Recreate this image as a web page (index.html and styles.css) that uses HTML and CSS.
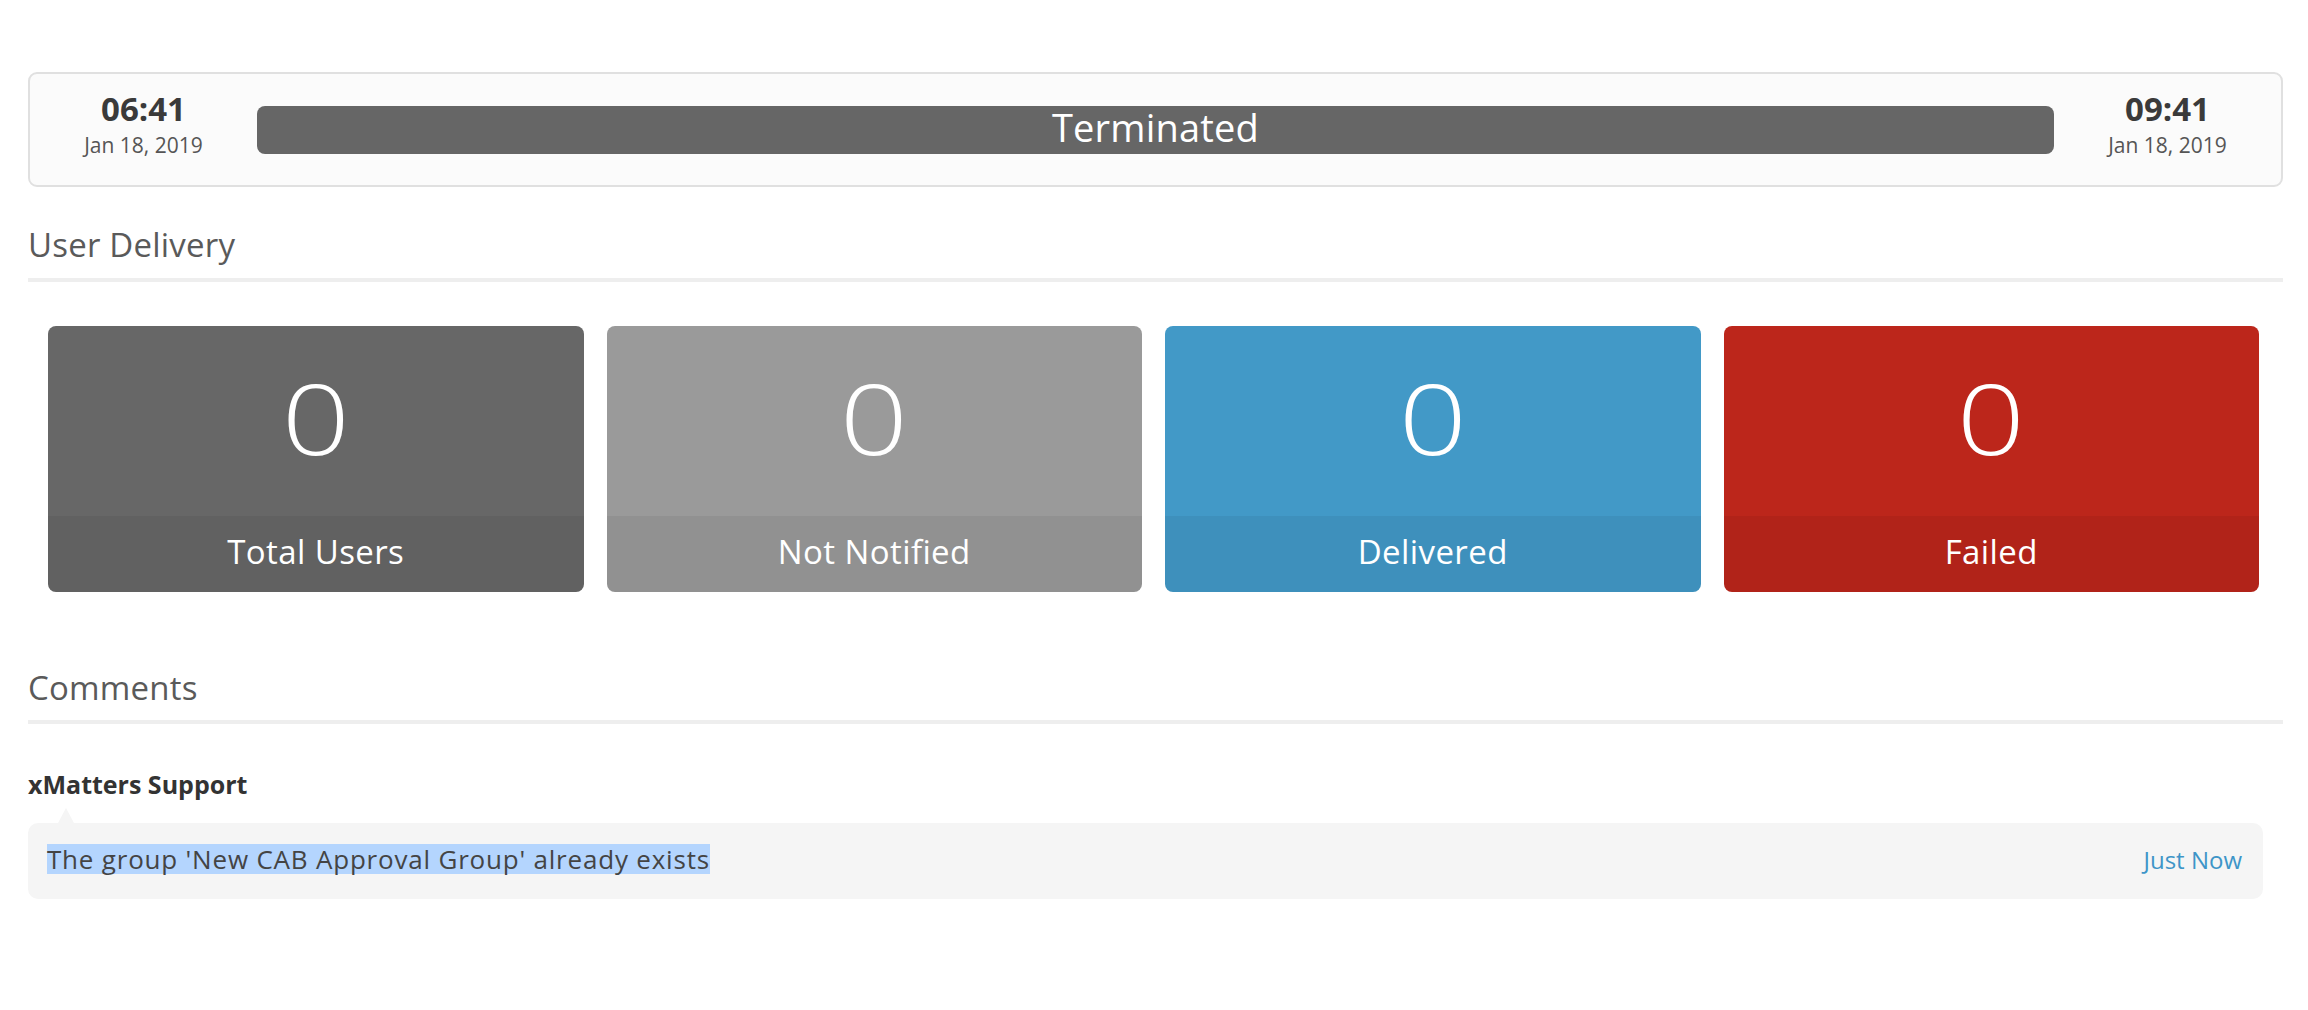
FILE: index.html
```html
<!DOCTYPE html>
<html lang="en">
<head>
<meta charset="utf-8">
<title>Event</title>
<link rel="stylesheet" href="styles.css">
</head>
<body>
<div class="page">
  <div class="timeline">
    <div class="stamp">
      <div class="time">06:41</div>
      <div class="date">Jan 18, 2019</div>
    </div>
    <div class="status-bar">Terminated</div>
    <div class="stamp">
      <div class="time">09:41</div>
      <div class="date">Jan 18, 2019</div>
    </div>
  </div>

  <h2 class="section-title title-delivery">User Delivery</h2>
  <div class="cards">
    <div class="card card-total">
      <div class="card-value"><span class="digit">0</span></div>
      <div class="card-label">Total Users</div>
    </div>
    <div class="card card-not">
      <div class="card-value"><span class="digit">0</span></div>
      <div class="card-label">Not Notified</div>
    </div>
    <div class="card card-delivered">
      <div class="card-value"><span class="digit">0</span></div>
      <div class="card-label">Delivered</div>
    </div>
    <div class="card card-failed">
      <div class="card-value"><span class="digit">0</span></div>
      <div class="card-label">Failed</div>
    </div>
  </div>

  <h2 class="section-title title-comments">Comments</h2>
  <div class="comment">
    <div class="comment-author">xMatters Support</div>
    <div class="comment-bubble">
      <span class="comment-text"><span class="selected">The group 'New CAB Approval Group' already exists</span></span>
      <span class="comment-time">Just Now</span>
    </div>
  </div>
</div>
</body>
</html>
```

FILE: styles.css
```css
* { box-sizing: border-box; }
html, body { margin: 0; padding: 0; background: #ffffff; }
body {
  font-family: "Open Sans", "Liberation Sans", sans-serif;
  color: #444;
}
.page {
  padding: 72px 25px 0 28px;
}

/* timeline */
.timeline {
  display: flex;
  height: 115px;
  border: 2px solid #e0e0e0;
  border-radius: 9px;
  background: #fbfbfb;
  align-items: center;
}
.stamp {
  width: 227px;
  flex: 0 0 227px;
  align-self: flex-start;
  padding-top: 17px;
  text-align: center;
}
.time {
  font-size: 33px;
  font-weight: 700;
  line-height: 36px;
  color: #3a3a3a;
}
.date {
  margin-top: 5px;
  font-size: 21px;
  line-height: 26px;
  color: #555;
}
.status-bar {
  flex: 1;
  height: 48px;
  line-height: 42px;
  padding-bottom: 6px;
  background: #666666;
  border-radius: 8px;
  color: #fff;
  text-align: center;
  font-size: 38px;
  font-weight: 400;
  letter-spacing: 0.2px;
}

/* section titles */
.section-title {
  margin: 0;
  font-size: 33px;
  font-weight: 400;
  line-height: 40px;
  color: #5a5a5a;
  padding-bottom: 12px;
  border-bottom: 4px solid #eeeeee;
  letter-spacing: 0.2px;
}
.title-delivery { margin-top: 38px; padding-bottom: 13px; }
.title-comments { margin-top: 76px; }

/* cards */
.cards {
  display: flex;
  gap: 23px;
  padding: 0 24px 0 20px;
  margin-top: 44px;
}
.card {
  flex: 1;
  height: 266px;
  border-radius: 8px;
  overflow: hidden;
  color: #fff;
  display: flex;
  flex-direction: column;
}
.card-value {
  height: 190px;
  padding-top: 42px;
  font-size: 98px;
  font-weight: 300;
  line-height: 98px;
  text-align: center;
}
.digit {
  display: inline-block;
  transform: scaleX(1.22);
}
.card-label {
  height: 76px;
  padding-top: 16px;
  font-size: 33px;
  line-height: 40px;
  letter-spacing: 0.4px;
  text-align: center;
  background: rgba(0, 0, 0, 0.055);
}
.card-total { background: #676767; }
.card-not { background: #9a9a9a; }
.card-delivered { background: #4299c7; }
.card-failed { background: #bc261b; }

/* comments */
.comment {
  margin-top: 44px;
  padding-right: 20px;
}
.comment-author {
  font-size: 25px;
  font-weight: 700;
  line-height: 32px;
  color: #333;
}
.comment-bubble {
  position: relative;
  margin-top: 23px;
  background: #f5f5f5;
  border-radius: 10px;
  padding: 21px 21px 24px 19px;
  display: flex;
  justify-content: space-between;
  align-items: baseline;
}
.comment-bubble::before {
  content: "";
  position: absolute;
  left: 30px;
  top: -15px;
  border-left: 8px solid transparent;
  border-right: 8px solid transparent;
  border-bottom: 15px solid #f5f5f5;
}
.comment-text {
  font-size: 26px;
  line-height: 30px;
  letter-spacing: 0.8px;
  color: #444;
}
.selected {
  background: #b4d5fe;
  display: inline-block;
}
.comment-time {
  font-size: 24px;
  line-height: 30px;
  color: #3e95c8;
}
```
